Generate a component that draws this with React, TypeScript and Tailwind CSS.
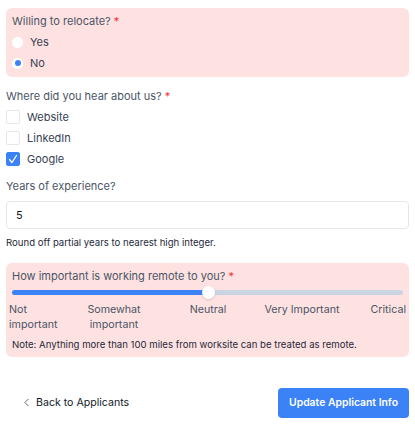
import { ChevronLeft } from "lucide-react";

function Radio({ label, checked }: { label: string; checked?: boolean }) {
  return (
    <label className="flex items-center gap-[7px] h-[21px]">
      <span className="w-[11px] h-[11px] rounded-full bg-white flex items-center justify-center">
        {checked && <span className="w-[6px] h-[6px] rounded-full bg-[#3b82f6]" />}
      </span>
      <span className="text-[11px] text-gray-700">{label}</span>
    </label>
  );
}

function Checkbox({ label, checked }: { label: string; checked?: boolean }) {
  return (
    <label className="flex items-center gap-[7px] h-[21px]">
      <span
        className={
          checked
            ? "w-[14px] h-[14px] rounded-[2px] bg-[#3b82f6] border border-[#3b82f6] flex items-center justify-center"
            : "w-[14px] h-[14px] rounded-[2px] bg-white border border-gray-200"
        }
      >
        {checked && (
          <svg width="10" height="10" viewBox="0 0 10 10" fill="none">
            <path d="M1.5 5.5 L4 8.5 L8.5 1.5" stroke="white" strokeWidth="1.3" strokeLinecap="round" strokeLinejoin="round" />
          </svg>
        )}
      </span>
      <span className="text-[11px] text-gray-700">{label}</span>
    </label>
  );
}

export default function App() {
  const value = 50;
  return (
    <div className="w-[415px] h-[424px] bg-white px-[6px] pt-[8px] font-['Inter',sans-serif]">
      <div className="bg-[#fee2e2] rounded-[6px] px-[6px] pt-[6px] pb-[3.5px]">
        <p className="text-[11px] text-gray-600 leading-[15px] mb-[2.5px]">
          Willing to relocate? <span className="text-red-500">*</span>
        </p>
        <Radio label="Yes" />
        <Radio label="No" checked />
      </div>

      <div className="mt-[11.5px]">
        <p className="text-[11px] text-gray-600 leading-[15px] mb-[3px]">
          Where did you hear about us? <span className="text-red-500">*</span>
        </p>
        <Checkbox label="Website" />
        <Checkbox label="LinkedIn" />
        <Checkbox label="Google" checked />
      </div>

      <div className="mt-[9px]">
        <p className="text-[11px] text-gray-600 leading-[15px]">Years of experience?</p>
        <input
          readOnly
          value="5"
          className="mt-[7.5px] w-full h-[28px] border border-gray-200 rounded-[4px] px-[9px] text-[11px] text-gray-900 outline-none"
        />
        <p className="mt-[6.5px] text-[9.6px] text-gray-800 leading-[13px]">
          Round off partial years to nearest high integer.
        </p>
      </div>

      <div className="mt-[14.5px] bg-[#fee2e2] rounded-[6px] px-[6px] pt-[5.5px] pb-[6.5px]">
        <p className="text-[11px] text-gray-600 leading-[15px]">
          How important is working remote to you? <span className="text-red-500">*</span>
        </p>
        <div className="mt-[2px] h-[13px] flex items-center">
          <div className="relative w-full h-[5px] rounded-full bg-[#cbd5e1]">
            <div className="h-full rounded-full bg-[#3b82f6]" style={{ width: `${value}%` }} />
            <div
              className="absolute top-1/2 w-[13px] h-[13px] -ml-[6px] -mt-[6.5px] rounded-full bg-white shadow-sm"
              style={{ left: `${value}%` }}
            />
          </div>
        </div>
        <div className="-mx-[3px] mt-[3px] grid grid-cols-[58px_94px_94px_94px_1fr] text-[10.7px] text-gray-600 leading-[15px]">
          <span className="text-left">Not<br />important</span>
          <span className="text-center">Somewhat<br />important</span>
          <span className="text-center">Neutral</span>
          <span className="text-center">Very Important</span>
          <span className="text-right">Critical</span>
        </div>
        <p className="mt-[6px] text-[9.6px] text-gray-800 leading-[13px]">
          Note: Anything more than 100 miles from worksite can be treated as remote.
        </p>
      </div>

      <div className="mt-[31px] flex items-center justify-between">
        <button className="flex items-center gap-[3px] pl-[14px] text-[10.6px] text-gray-900">
          <ChevronLeft size={13} strokeWidth={1.5} className="text-gray-700" />
          Back to Applicants
        </button>
        <button className="h-[30px] px-[11px] rounded-[4px] bg-[#3b82f6] text-white text-[10.4px] font-semibold">
          Update Applicant Info
        </button>
      </div>
    </div>
  );
}
